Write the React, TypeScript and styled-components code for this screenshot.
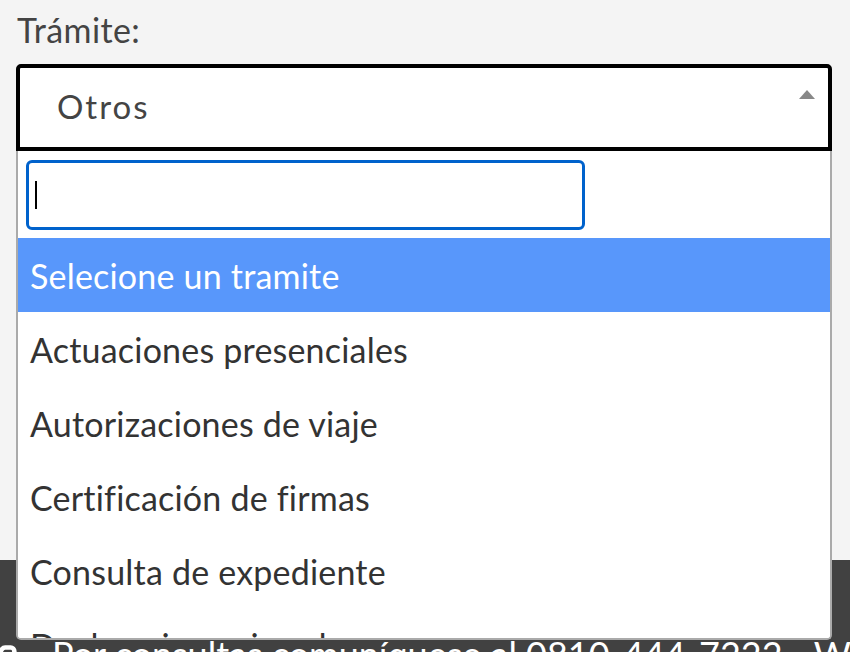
import React from 'react';
import styled, { createGlobalStyle } from 'styled-components';
import { Phone } from 'lucide-react';

//全体のスタイル
const GlobalStyle = createGlobalStyle`
  html, body {
    margin: 0;
    padding: 0;
    background: #f4f4f4;
  }
  body {
    font-family: Lato, "Open Sans", sans-serif;
    overflow: hidden;
  }
`;

const Page = styled.div`
  width: 850px;
  height: 652px;
  overflow: hidden;
  background: #f4f4f4;
`;

const Main = styled.div`
  height: 560px;
  padding: 0 18px 0 16px;
  box-sizing: border-box;
`;

const Label = styled.div`
  height: 64px;
  padding-top: 10px;
  box-sizing: border-box;
  padding-left: 1px;
  font-size: 34px;
  letter-spacing: 0.4px;
  line-height: 40px;
  color: #444;
`;

const SelectWrap = styled.div`
  position: relative;
`;

const SelectBox = styled.div`
  height: 87px;
  box-sizing: border-box;
  border: 4px solid #000;
  border-radius: 5px 5px 0 0;
  background: #fff;
  display: flex;
  align-items: center;
  justify-content: space-between;
  padding: 0 13px 4px 37px;
`;

const Selected = styled.span`
  font-size: 33px;
  letter-spacing: 2px;
  color: #444;
`;

const Arrow = styled.span`
  width: 0;
  height: 0;
  border-left: 8px solid transparent;
  border-right: 8px solid transparent;
  border-bottom: 9px solid #888;
  margin-bottom: 22px;
`;

//ドロップダウン
const Dropdown = styled.div`
  position: absolute;
  top: 100%;
  left: 0;
  right: 0;
  height: 489px;
  box-sizing: border-box;
  background: #fff;
  border: 2px solid #aaa;
  border-top: none;
  border-radius: 0 0 5px 5px;
  overflow: hidden;
  z-index: 10;
`;

const SearchRow = styled.div`
  padding: 9px 8px 8px 8px;
`;

const SearchBox = styled.div`
  width: 559px;
  height: 70px;
  box-sizing: border-box;
  border: 3px solid #0062cc;
  border-radius: 6px;
  display: flex;
  align-items: center;
  padding-left: 6px;
`;

const Caret = styled.span`
  width: 2px;
  height: 28px;
  background: #000;
`;

const Option = styled.div<{ active?: boolean }>`
  height: 74px;
  display: flex;
  align-items: center;
  padding-left: 12px;
  font-size: 34px;
  letter-spacing: 0.2px;
  color: ${({ active }) => (active ? '#fff' : '#333')};
  background: ${({ active }) => (active ? '#5897fb' : '#fff')};
  white-space: nowrap;
`;

//フッター
const Footer = styled.div`
  height: 92px;
  background: #414141;
  color: #fff;
  display: flex;
  align-items: flex-start;
  gap: 34px;
  padding-top: 60px;
  box-sizing: border-box;
  white-space: nowrap;
  overflow: hidden;
`;

const FooterIcon = styled.span`
  display: flex;
  margin-left: -26px;
`;

const FooterText = styled.span`
  font-size: 36px;
  line-height: 44px;
  padding-top: 12px;
`;

const options = [
  'Selecione un tramite',
  'Actuaciones presenciales',
  'Autorizaciones de viaje',
  'Certificación de firmas',
  'Consulta de expediente',
  'Declaraciones juradas',
  'Oficios judiciales',
];

function App() {
  return (
    <Page>
      <GlobalStyle />
      <Main>
        <Label>Trámite:</Label>
        <SelectWrap>
          <SelectBox>
            <Selected>Otros</Selected>
            <Arrow />
          </SelectBox>
          <Dropdown>
            <SearchRow>
              <SearchBox role="textbox">
                <Caret />
              </SearchBox>
            </SearchRow>
            {options.map((element, index) => (
              <Option key={element} active={index === 0}>
                {element}
              </Option>
            ))}
          </Dropdown>
        </SelectWrap>
      </Main>
      <Footer>
        <FooterIcon>
          <Phone size={44} strokeWidth={2.5} color="#fff" />
        </FooterIcon>
        <FooterText>Por consultas comuníquese al 0810-444-7222 - Whatsapp</FooterText>
      </Footer>
    </Page>
  );
}

export default App;
